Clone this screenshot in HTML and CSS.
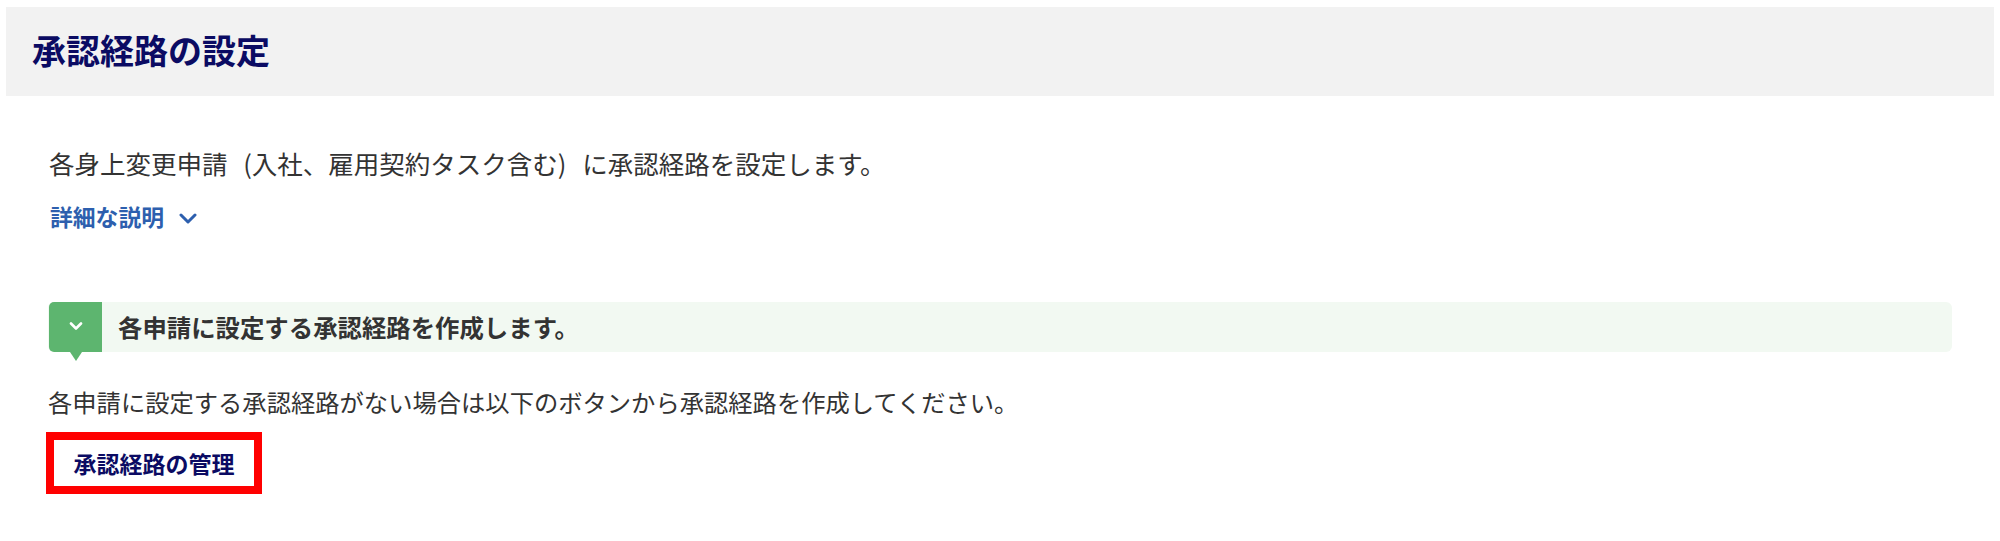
FILE: index.html
```html
<!DOCTYPE html>
<html lang="ja">
<head>
<meta charset="utf-8">
<title>承認経路の設定</title>
<link rel="stylesheet" href="styles.css">
</head>
<body>
<header class="page-header">
  <h1 class="page-title">承認経路の設定</h1>
</header>
<main class="content">
  <p class="lead">各身上変更申請 (入社、雇用契約タスク含む) に承認経路を設定します。</p>
  <a class="detail-link" href="#">詳細な説明
    <svg class="detail-chevron" width="18" height="11" viewBox="0 0 18 11"><path d="M2 2 L9 9 L16 2" fill="none" stroke="currentColor" stroke-width="3" stroke-linecap="round" stroke-linejoin="round"/></svg>
  </a>
  <section class="step">
    <div class="step-tab">
      <svg width="14" height="9" viewBox="0 0 14 9"><path d="M2 1.5 L7 6.5 L12 1.5" fill="none" stroke="#fff" stroke-width="2.6" stroke-linecap="round" stroke-linejoin="round"/></svg>
    </div>
    <div class="step-title">各申請に設定する承認経路を作成します。</div>
  </section>
  <p class="step-text">各申請に設定する承認経路がない場合は以下のボタンから承認経路を作成してください。</p>
  <button class="manage-btn" type="button">承認経路の管理</button>
</main>
</body>
</html>
```

FILE: styles.css
```css
html, body {
  margin: 0;
  padding: 0;
  background: #ffffff;
}
body {
  font-family: "Noto Sans CJK JP", "Noto Sans", sans-serif;
  color: #333333;
}
.page-header {
  margin: 7px 6px 0 6px;
  height: 89px;
  background: #f2f2f2;
  display: flex;
  align-items: center;
  padding-left: 26px;
}
.page-title {
  margin: 0;
  font-size: 34px;
  line-height: 40px;
  font-weight: 700;
  color: #0b0b63;
  letter-spacing: 0;
  padding-bottom: 4px;
}
.content {
  padding: 0 48px;
}
.lead {
  margin: 49px 0 0 1px;
  font-size: 25.5px;
  line-height: 36px;
  color: #333333;
  word-spacing: 10px;
}
.detail-link {
  margin-top: 18px;
  display: inline-flex;
  align-items: center;
  gap: 15px;
  font-size: 22.8px;
  line-height: 36px;
  font-weight: 700;
  color: #2d5fae;
  text-decoration: none;
  padding-left: 2px;
}
.detail-chevron {
  color: #2d5fae;
  margin-top: 2px;
}
.step {
  margin-top: 67px;
  height: 50px;
  display: flex;
  align-items: center;
  background: #f2f9f2;
  border-radius: 6px;
}
.step-tab {
  position: relative;
  width: 53px;
  height: 50px;
  margin-left: 1px;
  background: #5db56f;
  border-radius: 5px 0 0 5px;
  display: flex;
  align-items: center;
  justify-content: center;
}
.step-tab svg {
  margin-top: -2px;
}
.step-tab::after {
  content: "";
  position: absolute;
  left: 21px;
  top: 50px;
  border-left: 6px solid transparent;
  border-right: 6px solid transparent;
  border-top: 9px solid #5db56f;
}
.step-title {
  margin-left: 16px;
  font-size: 24.4px;
  font-weight: 700;
  color: #333333;
  line-height: 36px;
}
.step-text {
  margin: 32px 0 0 0;
  font-size: 24.3px;
  line-height: 36px;
  color: #333333;
}
.manage-btn {
  margin-top: 12px;
  margin-left: -2px;
  width: 216px;
  height: 62px;
  border: 8px solid #ff0000;
  background: #ffffff;
  font-family: "Noto Sans CJK JP", "Noto Sans", sans-serif;
  font-size: 23px;
  font-weight: 700;
  color: #0b0b63;
  padding: 0;
  display: flex;
  align-items: center;
  justify-content: center;
  cursor: pointer;
}
```
